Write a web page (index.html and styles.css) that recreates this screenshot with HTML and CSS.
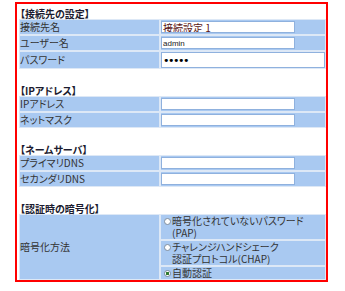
FILE: index.html
```html
<!DOCTYPE html>
<html lang="ja">
<head>
<meta charset="utf-8">
<title>接続先の設定</title>
<link rel="stylesheet" href="styles.css">
</head>
<body>
<div class="panel">
  <div class="sec-title first">【接続先の設定】</div>
  <table class="grid">
    <tr><th>接続先名</th><td><input class="field field-jp" type="text" value="接続設定 1"></td></tr>
    <tr><th>ユーザー名</th><td><input class="field field-latin" type="text" value="admin"></td></tr>
    <tr class="tall"><th>パスワード</th><td class="pw-cell"><input class="field field-pw" type="password" value="abcde"></td></tr>
  </table>

  <div class="sec-title">【IPアドレス】</div>
  <table class="grid">
    <tr><th>IPアドレス</th><td><input class="field" type="text" value=""></td></tr>
    <tr><th>ネットマスク</th><td><input class="field" type="text" value=""></td></tr>
  </table>

  <div class="sec-title">【ネームサーバ】</div>
  <table class="grid">
    <tr><th>プライマリDNS</th><td><input class="field" type="text" value=""></td></tr>
    <tr><th>セカンダリDNS</th><td><input class="field" type="text" value=""></td></tr>
  </table>

  <div class="sec-title">【認証時の暗号化】</div>
  <table class="grid">
    <tr>
      <th rowspan="3" class="method">暗号化方法</th>
      <td class="opt"><label class="opt-label"><input class="radio" type="radio" name="enc"><span class="opt-text">暗号化されていないパスワード<br>(PAP)</span></label></td>
    </tr>
    <tr>
      <td class="opt"><label class="opt-label"><input class="radio" type="radio" name="enc"><span class="opt-text">チャレンジハンドシェーク<br>認証プロトコル(CHAP)</span></label></td>
    </tr>
    <tr>
      <td class="opt"><label class="opt-label"><input class="radio" type="radio" name="enc" checked><span class="opt-text">自動認証</span></label></td>
    </tr>
  </table>
</div>
</body>
</html>
```
FILE: styles.css
```css
html, body {
  margin: 0;
  padding: 0;
  background: #ffffff;
}

body {
  font-family: "Noto Sans CJK JP", "Noto Sans", sans-serif;
  font-size: 10px;
  color: #333333;
  font-feature-settings: "palt";
}

.panel {
  margin: 2px 0 0 15px;
  width: 307px;
  padding: 0 0 0 2px;
  border: 2px solid #ff0000;
}

.sec-title {
  margin-top: 16px;
  padding-left: 1px;
  line-height: 11px;
  font-weight: bold;
  color: #1c1c30;
}

.sec-title.first {
  margin-top: 4px;
}

.grid {
  width: 307px;
  table-layout: fixed;
  border-collapse: separate;
  border-spacing: 0;
}

.grid th,
.grid td {
  border: 1px solid #dde8f6;
  background: #a9c9f1;
  padding: 0;
  line-height: 14px;
  text-align: left;
  font-weight: normal;
  vertical-align: middle;
}

.grid th {
  width: 139px;
  color: #333333;
}

.field {
  display: block;
  box-sizing: border-box;
  width: 134px;
  height: 12px;
  margin: 1px 0 1px 0;
  padding: 0 0 0 1px;
  border: 1px solid #8fb1de;
  background: #ffffff;
  font-family: "Noto Sans CJK JP", "Noto Sans", sans-serif;
  font-size: 10px;
  line-height: 10px;
  color: #222222;
  outline: none;
}

.field-jp {
  color: #5a1414;
  font-feature-settings: "palt";
}

.field-latin {
  font-family: "Liberation Sans", sans-serif;
  font-size: 8px;
}

.pw-cell .field-pw {
  width: 100%;
  height: 16px;
  margin: 0;
  font-family: "DejaVu Sans", sans-serif;
  font-size: 11px;
  letter-spacing: -1.5px;
  color: #000000;
}

.opt {
  padding-top: 1px;
}

.grid td.opt {
  line-height: 12px;
  vertical-align: top;
}

.opt-label {
  display: flex;
  align-items: flex-start;
}

.radio {
  appearance: none;
  -webkit-appearance: none;
  flex: none;
  box-sizing: border-box;
  width: 7px;
  height: 7px;
  margin: 3px 1px 0 3px;
  border: 1px solid #7f8e9e;
  border-radius: 50%;
  background: #ffffff;
}

.radio:checked {
  background: radial-gradient(circle, #2f7a2f 0 1.4px, #ffffff 1.9px);
}

.opt-text {
  color: #333333;
}

.method {
  vertical-align: middle;
}
```
